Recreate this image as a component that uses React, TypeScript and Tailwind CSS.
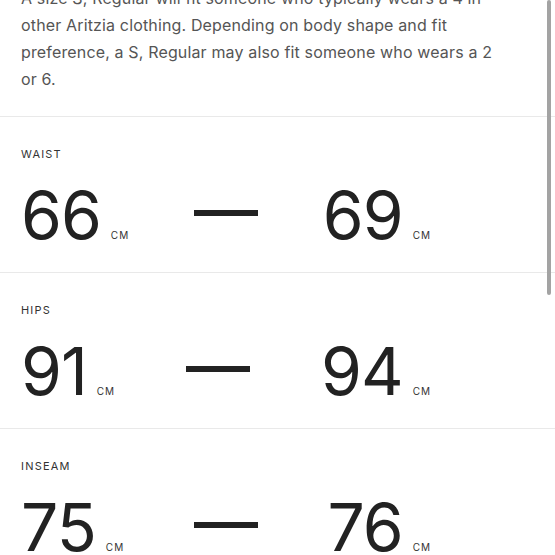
import React from "react";

const rows = [
  { label: "WAIST", from: "66", to: "69" },
  { label: "HIPS", from: "91", to: "94" },
  { label: "INSEAM", from: "75", to: "76" },
];

function Value({ n }: { n: string }) {
  return (
    <div className="flex items-baseline">
      <span className="text-[66px] leading-none tracking-[-1px] text-[#222]">{n}</span>
      <span className="ml-[10px] text-[10px] tracking-[1px] text-[#333]">CM</span>
    </div>
  );
}

export default function App() {
  return (
    <div
      className="relative h-[555px] w-[555px] overflow-hidden bg-white"
      style={{ fontFamily: "Inter, 'Liberation Sans', sans-serif" }}
    >
      <div className="-mt-[15px]">
        {/* Fit note */}
        <div className="px-[21px] pb-[23px]">
          <p className="w-[472px] text-[16px] leading-[27px] tracking-[0.15px] text-[#555]">
            A size S, Regular will fit someone who typically wears a 4 in other Aritzia
            clothing. Depending on body shape and fit preference, a S, Regular may also fit
            someone who wears a 2 or 6.
          </p>
        </div>

        {/* Measurements */}
        {rows.map((r) => (
          <div key={r.label} className="h-[156px] border-t border-[#e9e9e9] px-[21px] pt-[31px]">
            <div className="text-[11px] leading-[12px] tracking-[1.2px] text-[#333]">{r.label}</div>
            <div className="mt-[22px] flex w-[410px] items-center justify-between">
              <Value n={r.from} />
              <div className="mb-[4px] h-[6px] w-[64px] bg-[#222]" />
              <Value n={r.to} />
            </div>
          </div>
        ))}
      </div>

      {/* overlay scrollbar */}
      <div className="absolute right-[4px] top-0 h-[295px] w-[4px] rounded-full bg-[#a3a3a3]" />
    </div>
  );
}
